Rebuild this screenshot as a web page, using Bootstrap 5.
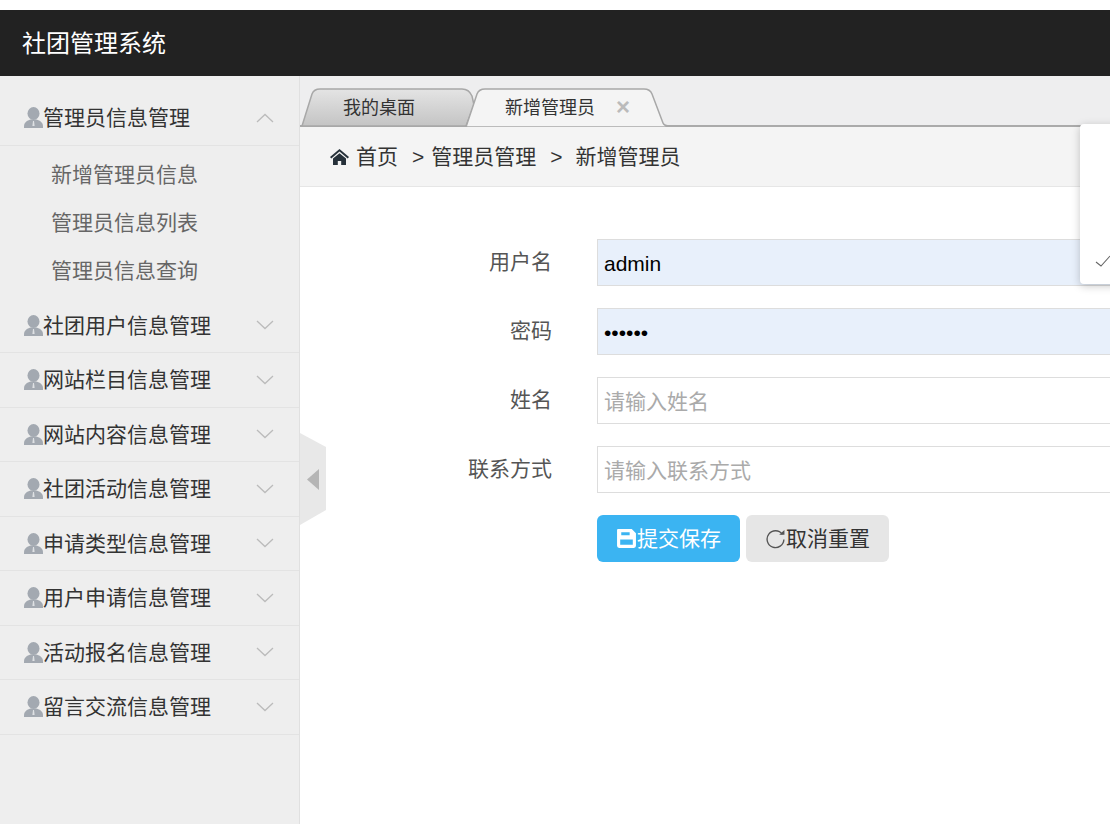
<!doctype html>
<html lang="zh"><head><meta charset="utf-8">
<link href="https://cdn.jsdelivr.net/npm/bootstrap@5.3.0/dist/css/bootstrap.min.css" rel="stylesheet">
<style>
html,body{height:100%;overflow:hidden}
body{font-family:"Liberation Sans","Noto Sans CJK SC",sans-serif;font-size:21px;color:#333;padding-top:10px;background:#fff}
.shell{height:814px;display:flex;flex-direction:column}
.topbar{height:66px;background:#222;color:#fff;font-size:24px;padding:2px 0 0 22px;flex:none}
.mainrow{flex:1;min-height:0}
.side{width:300px;flex:none;background:#eee;border-right:1px solid #e0e0e0;padding-top:14px}
.grp{height:54.5px;border-bottom:1px solid #e3e3e3;color:#333;padding:0 25px 0 24px}
.grp.first{height:56px}
.grp svg.usr{width:19px;height:21px;flex:none}
.subs{height:152.5px;padding-top:5px}
.subs div{height:48px;padding-left:51px;color:#666;display:flex;align-items:center}
.work{flex:1;min-width:0;position:relative;overflow:hidden;background:#fff}
.tabstrip{height:51px;background:#eeeeef;border-bottom:2px solid #aaa;padding-left:1px;position:relative}
.tabsvg{position:absolute;left:0;top:11px;width:370px;height:40px}
.tablbl{position:absolute;top:12px;height:40px;font-size:18px;line-height:40px;color:#333}
.tabx{position:absolute;left:316px;top:11px;height:40px;line-height:40px;font-size:24px;color:#bbb;font-weight:700}
.crumbs{height:60px;background:#f4f4f4;border-bottom:1px solid #e6e6e6;padding-left:30px;color:#333;white-space:nowrap}
.crumbs svg{width:19px;height:16px;margin-right:7px}
.formarea{padding-top:52px}
.frow{height:47px;margin-bottom:22px}
.flabel{width:252px;flex:none;text-align:right;color:#555;line-height:46px}
.finput{width:700px;height:47px;margin-left:45px;flex:none;border:1px solid #ddd;border-radius:0;padding:2px 5px 0 6px;font-size:21px;color:#000;background:#fff;box-shadow:none}
.finput.auto{background:#e8f0fb}
.finput::placeholder{color:#aaa;opacity:1}
.btnrow{margin-left:297px;gap:6px}
.sbtn{height:47px;font-size:21px;padding:0 19px;border-radius:6px;border:0;display:flex;align-items:center}
.sbtn.go{background:#3bb4f2;color:#fff}
.sbtn.no{background:#e6e6e6;color:#333}
.sbtn svg{width:21px;height:21px;flex:none}
.fold{position:absolute;left:0;top:357px;width:26px;height:92px;display:block}
.popmenu{position:absolute;left:780px;top:48px;width:60px;height:160px;background:#fff;border-radius:4px 0 0 4px;box-shadow:0 2px 8px rgba(0,0,0,.22)}
.popmenu svg{position:absolute;left:15px;top:130px;width:16px;height:14px}
</style></head><body>
<svg width="0" height="0" class="position-absolute"><defs>
<symbol id="usr" viewBox="0 0 19 21"><ellipse cx="9.5" cy="6.500" rx="6" ry="6.500" fill="#a3a9b1"/><path d="M0 19.500c0-4 3-6 6.500-7h6c3.500 1 6.500 3 6.500 7V21H0z" fill="#a3a9b1"/><path d="M9 14h1l.6 5H8.400z" fill="#dfe1e4"/></symbol>
<symbol id="dn" viewBox="0 0 18 10"><path d="M1 1l8 7.500L17 1" fill="none" stroke="#bbb" stroke-width="1.300"/></symbol>
</defs></svg>
<div class="shell">
<div class="topbar d-flex align-items-center">社团管理系统</div>
<div class="mainrow d-flex">
<nav class="side">
<div class="grp first d-flex align-items-center"><svg class="usr"><use href="#usr"/></svg><span class="flex-grow-1">管理员信息管理</span><svg width="18" height="10" viewBox="0 0 18 10"><path d="M1 9 9 1.500 17 9" fill="none" stroke="#bbb" stroke-width="1.300"/></svg></div>
<div class="subs"><div>新增管理员信息</div><div>管理员信息列表</div><div>管理员信息查询</div></div>
<div class="grp d-flex align-items-center"><svg class="usr"><use href="#usr"/></svg><span class="flex-grow-1">社团用户信息管理</span><svg width="18" height="10"><use href="#dn"/></svg></div>
<div class="grp d-flex align-items-center"><svg class="usr"><use href="#usr"/></svg><span class="flex-grow-1">网站栏目信息管理</span><svg width="18" height="10"><use href="#dn"/></svg></div>
<div class="grp d-flex align-items-center"><svg class="usr"><use href="#usr"/></svg><span class="flex-grow-1">网站内容信息管理</span><svg width="18" height="10"><use href="#dn"/></svg></div>
<div class="grp d-flex align-items-center"><svg class="usr"><use href="#usr"/></svg><span class="flex-grow-1">社团活动信息管理</span><svg width="18" height="10"><use href="#dn"/></svg></div>
<div class="grp d-flex align-items-center"><svg class="usr"><use href="#usr"/></svg><span class="flex-grow-1">申请类型信息管理</span><svg width="18" height="10"><use href="#dn"/></svg></div>
<div class="grp d-flex align-items-center"><svg class="usr"><use href="#usr"/></svg><span class="flex-grow-1">用户申请信息管理</span><svg width="18" height="10"><use href="#dn"/></svg></div>
<div class="grp d-flex align-items-center"><svg class="usr"><use href="#usr"/></svg><span class="flex-grow-1">活动报名信息管理</span><svg width="18" height="10"><use href="#dn"/></svg></div>
<div class="grp d-flex align-items-center"><svg class="usr"><use href="#usr"/></svg><span class="flex-grow-1">留言交流信息管理</span><svg width="18" height="10"><use href="#dn"/></svg></div>
</nav>
<main class="work">
<div class="tabstrip">
<svg class="tabsvg" viewBox="0 0 370 40"><defs><linearGradient id="tg" x1="0" y1="0" x2="0" y2="1"><stop offset="0" stop-color="#e4e4e4"/><stop offset="1" stop-color="#c4c4c4"/></linearGradient></defs>
<path d="M2 39 12 7Q14 2 20 2H162Q169 2 172 9L174 18 166 39Z" fill="url(#tg)" stroke="#a8a8a8" stroke-width="1.500"/>
<path d="M166 40 177 7Q179 2 185 2H344Q350 2 352 7L363 36Q364 39 370 39V40Z" fill="#f4f4f4" stroke="#a8a8a8" stroke-width="1.500"/></svg>
<span class="tablbl" style="left:43px">我的桌面</span><span class="tablbl" style="left:205px">新增管理员</span><span class="tabx">×</span>
</div>
<div class="crumbs d-flex align-items-center"><svg viewBox="0 0 19 16"><path d="M9.500 0 19 8l-1.300 1.500L9.500 2.600 1.300 9.500 0 8z" fill="#26313a"/><path d="M3 9.500 9.500 4.200 16 9.500V16h-4.800v-4H7.800v4H3z" fill="#26313a"/></svg><span>首页</span><span style="margin-left:14px">&gt;</span><span style="margin-left:7px">管理员管理</span><span style="margin-left:14px">&gt;</span><span style="margin-left:13px">新增管理员</span></div>
<div class="formarea">
<div class="frow d-flex"><label class="flabel">用户名</label><input class="form-control finput auto" value="admin"></div>
<div class="frow d-flex"><label class="flabel">密码</label><input class="form-control finput auto" type="password" value="123456"></div>
<div class="frow d-flex"><label class="flabel">姓名</label><input class="form-control finput" placeholder="请输入姓名"></div>
<div class="frow d-flex"><label class="flabel">联系方式</label><input class="form-control finput" placeholder="请输入联系方式"></div>
<div class="d-flex btnrow">
<button class="sbtn go" type="button"><svg viewBox="0 0 20 20"><path fill-rule="evenodd" d="M2 1h13l4 4v12a2 2 0 0 1-2 2H3a2 2 0 0 1-2-2V2a1 1 0 0 1 1-1zM5 4v3h8V4zM4 11v5h12v-5z" fill="#fff"/></svg>提交保存</button>
<button class="sbtn no" type="button"><svg viewBox="0 0 20 20"><path d="M16.500 6A8 8 0 1 0 18 11" fill="none" stroke="#555" stroke-width="1.300"/><path d="M13.500 6.500h5V2z" fill="#555"/></svg>取消重置</button>
</div>
</div>
<svg class="fold" viewBox="0 0 26 92"><path d="M0 0 26 14V77L0 92Z" fill="#e8e8e8"/><path d="M19 36V57L7 46.500Z" fill="#b5b5b5"/></svg>
<div class="popmenu"><svg viewBox="0 0 16 14"><path d="M1 8l5 4L15 2" fill="none" stroke="#666" stroke-width="1.100"/></svg></div>
</main>
</div></div>
<script src="https://cdn.jsdelivr.net/npm/bootstrap@5.3.0/dist/js/bootstrap.bundle.min.js"></script>
</body></html>
